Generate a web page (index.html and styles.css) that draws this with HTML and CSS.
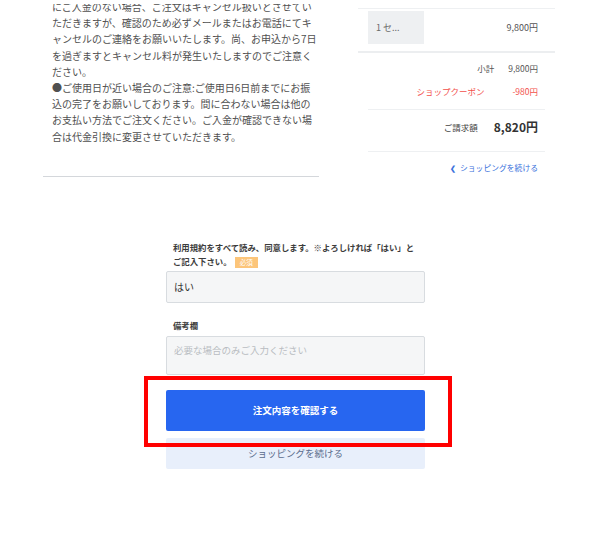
FILE: index.html
```html
<!DOCTYPE html>
<html lang="ja">
<head>
<meta charset="utf-8">
<title>注文確認</title>
<link rel="stylesheet" href="styles.css">
</head>
<body>
<div class="top">
  <section class="notes">
    <p class="note">にご入金のない場合、ご注文はキャンセル扱いとさせてい<br>ただきますが、確認のため必ずメールまたはお電話にてキ<br>ャンセルのご連絡をお願いいたします。尚、お申込から7日<br>を過ぎますとキャンセル料が発生いたしますのでご注意く<br>ださい。<br>●ご使用日が近い場合のご注意:ご使用日6日前までにお振<br>込の完了をお願いしております。間に合わない場合は他の<br>お支払い方法でご注文ください。ご入金が確認できない場<br>合は代金引換に変更させていただきます。</p>
  </section>
  <aside class="summary">
    <div class="item">
      <div class="item-name">1 セ...</div>
      <div class="item-price">9,800円</div>
    </div>
    <div class="totals">
      <div class="row"><span class="k">小計</span><span class="v">9,800円</span></div>
      <div class="row coupon"><span class="k">ショップクーポン</span><span class="v">-980円</span></div>
    </div>
    <div class="grand">
      <span class="k">ご請求額</span><span class="v">8,820円</span>
    </div>
    <div class="back"><span class="chev">&#10094;</span>ショッピングを続ける</div>
  </aside>
  <div class="scroll-edge"></div>
</div>

<form class="form">
  <label class="label">利用規約をすべて読み、同意します。※よろしければ「はい」と<br>ご記入下さい。<span class="badge">必須</span></label>
  <div class="input">はい</div>
  <label class="label label-gap">備考欄</label>
  <div class="textarea">必要な場合のみご入力ください</div>
  <div class="primary-wrap">
    <div class="primary">注文内容を確認する</div>
    <div class="highlight"></div>
  </div>
  <div class="secondary">ショッピングを続ける</div>
</form>
</body>
</html>
```

FILE: styles.css
```css
* { box-sizing: border-box; }
html, body { margin: 0; padding: 0; background: #fff; }
body {
  font-family: "Noto Sans CJK JP", "Noto Sans", sans-serif;
  color: #4d4d4d;
  width: 600px;
  height: 537px;
  overflow: hidden;
}
.top {
  position: relative;
  display: flex;
  align-items: flex-start;
}
.scroll-edge {
  position: absolute;
  left: 0;
  top: 0;
  width: 340px;
  height: 4px;
  background: #fff;
}
.notes {
  margin-left: 43px;
  width: 276px;
  height: 177px;
  border-bottom: 1px solid #d4d7db;
  padding: 0 9px;
  overflow: visible;
}
.note {
  margin: -1px 0 0;
  font-size: 10px;
  line-height: 16.2px;
  white-space: nowrap;
  letter-spacing: 0;
  color: #505050;
}
.summary {
  margin-left: 39px;
  width: 197px;
  margin-top: 8px;
}
.item {
  display: flex;
  align-items: flex-start;
  justify-content: space-between;
  border-top: 1px solid #eef0f2;
  border-bottom: 2px solid #eceef0;
  height: 45px;
  padding: 2px 17px 0 10px;
}
.item-name {
  width: 56px;
  height: 33px;
  background: #eef0f2;
  font-size: 9px;
  line-height: 33px;
  padding-left: 8px;
  color: #6a6a6a;
}
.item-price {
  font-size: 9px;
  line-height: 33px;
  color: #555;
}
.totals {
  margin: 0 10px;
  padding-top: 9px;
  height: 57px;
  border-bottom: 1px solid #eef0f2;
}
.row {
  display: flex;
  justify-content: flex-end;
  font-size: 8.5px;
  line-height: 12px;
  height: 23px;
  padding-right: 7px;
  color: #555;
}
.row .k { margin-right: 14px; }
.coupon { color: #f2504b; }
.coupon .k { margin-right: 28px; }
.grand {
  margin: 0 10px;
  height: 42px;
  border-bottom: 1px solid #eef0f2;
  display: flex;
  justify-content: flex-end;
  align-items: center;
  padding-right: 7px;
  padding-bottom: 8px;
}
.grand .k { font-size: 8.5px; color: #444; margin-right: 16px; }
.grand .v { font-size: 12px; font-weight: bold; color: #333; }
.back {
  margin: 0 10px;
  text-align: right;
  padding-right: 7px;
  font-size: 7.8px;
  line-height: 12px;
  padding-top: 10px;
  color: #3b72dc;
}
.chev {
  font-size: 7px;
  font-weight: bold;
  margin-right: 4px;
}
.form {
  width: 259px;
  margin: 63px 0 0 166px;
  display: flex;
  flex-direction: column;
}
.label {
  font-size: 8.4px;
  line-height: 14px;
  font-weight: bold;
  color: #3c3c3c;
  padding-left: 7px;
}
.badge {
  display: inline-block;
  margin-left: 3px;
  width: 23px;
  height: 11px;
  line-height: 11px;
  background: #fcc57a;
  color: #fff;
  font-size: 6.5px;
  font-weight: normal;
  text-align: center;
  vertical-align: 0px;
}
.input {
  margin-top: 3px;
  height: 32px;
  border: 1px solid #d8dce0;
  border-radius: 2px;
  background: #f5f6f7;
  font-size: 10px;
  line-height: 30px;
  padding-left: 7px;
  color: #333;
}
.label-gap { margin-top: 15px; }
.textarea {
  margin-top: 4px;
  height: 39px;
  border: 1px solid #d8dce0;
  border-radius: 2px;
  background: #f5f6f7;
  font-size: 9.5px;
  line-height: 14px;
  padding: 6px 0 0 7px;
  color: #b9bdc2;
}
.primary-wrap {
  position: relative;
  margin-top: 15px;
}
.primary {
  height: 41px;
  background: #2766f0;
  border-radius: 2px;
  color: #fff;
  font-weight: bold;
  font-size: 9.5px;
  line-height: 41px;
  text-align: center;
}
.highlight {
  position: absolute;
  top: -14px;
  bottom: -16px;
  left: -22px;
  right: -27px;
  border: 4px solid #ff0000;
  pointer-events: none;
}
.secondary {
  margin-top: 7px;
  height: 31px;
  background: #e8effb;
  border-radius: 2px;
  color: #5a6c8c;
  font-size: 9.5px;
  line-height: 31px;
  text-align: center;
}
```
